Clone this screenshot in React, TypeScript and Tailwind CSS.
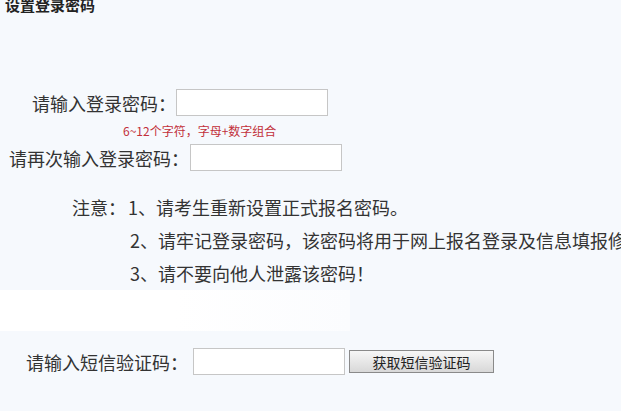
export default function App() {
  const font = "font-['Noto_Sans_CJK_SC','Noto_Sans',sans-serif]";
  return (
    <div className={`w-[621px] h-[411px] overflow-hidden bg-[#f6f9fd] text-[#333] ${font}`}>
      {/* title */}
      <div className="-mt-[5px] pl-[5px] h-[20px] leading-[20px] text-[15px] font-bold text-[#222]">
        设置登录密码
      </div>

      {/* password */}
      <div className="mt-[74px] flex items-center h-[27px] pl-[32px]">
        <span className="w-[144px] text-[18px] leading-none">请输入登录密码：</span>
        <input className="w-[152px] h-[27px] bg-white border border-[#c6c6c6] outline-none" />
      </div>
      <div className="mt-[7px] h-[16px] leading-[16px] pl-[123px] text-[12px] text-[#c2303a]">
        6~12个字符，字母+数字组合
      </div>
      <div className="mt-[5px] flex items-center h-[27px] pl-[9px]">
        <span className="w-[181px] text-[18px] leading-none">请再次输入登录密码：</span>
        <input className="w-[152px] h-[27px] bg-white border border-[#c6c6c6] outline-none" />
      </div>

      {/* notes */}
      <div className="mt-[20px] flex pl-[72px] text-[18px] leading-[33px]">
        <span className="w-[56px] shrink-0">注意：</span>
        <div className="whitespace-nowrap">
          <div>1、请考生重新设置正式报名密码。</div>
          <div className="pl-[2px]">2、请牢记登录密码，该密码将用于网上报名登录及信息填报修改</div>
          <div className="pl-[2px]">3、请不要向他人泄露该密码！</div>
        </div>
      </div>

      <div className="h-[41px] w-[350px] bg-gradient-to-r from-white via-white to-[#fbfcfe]" />

      {/* sms code */}
      <div className="mt-[17px] flex items-center h-[27px] pl-[26px]">
        <span className="w-[167px] text-[18px] leading-none">请输入短信验证码：</span>
        <input className="w-[152px] h-[27px] bg-white border border-[#c6c6c6] outline-none" />
        <button className="ml-[4px] w-[145px] h-[23px] border border-[#8a8a8a] bg-gradient-to-b from-[#f7f7f7] to-[#d8d8d8] text-[14px] leading-none text-[#222]">
          获取短信验证码
        </button>
      </div>
    </div>
  );
}
